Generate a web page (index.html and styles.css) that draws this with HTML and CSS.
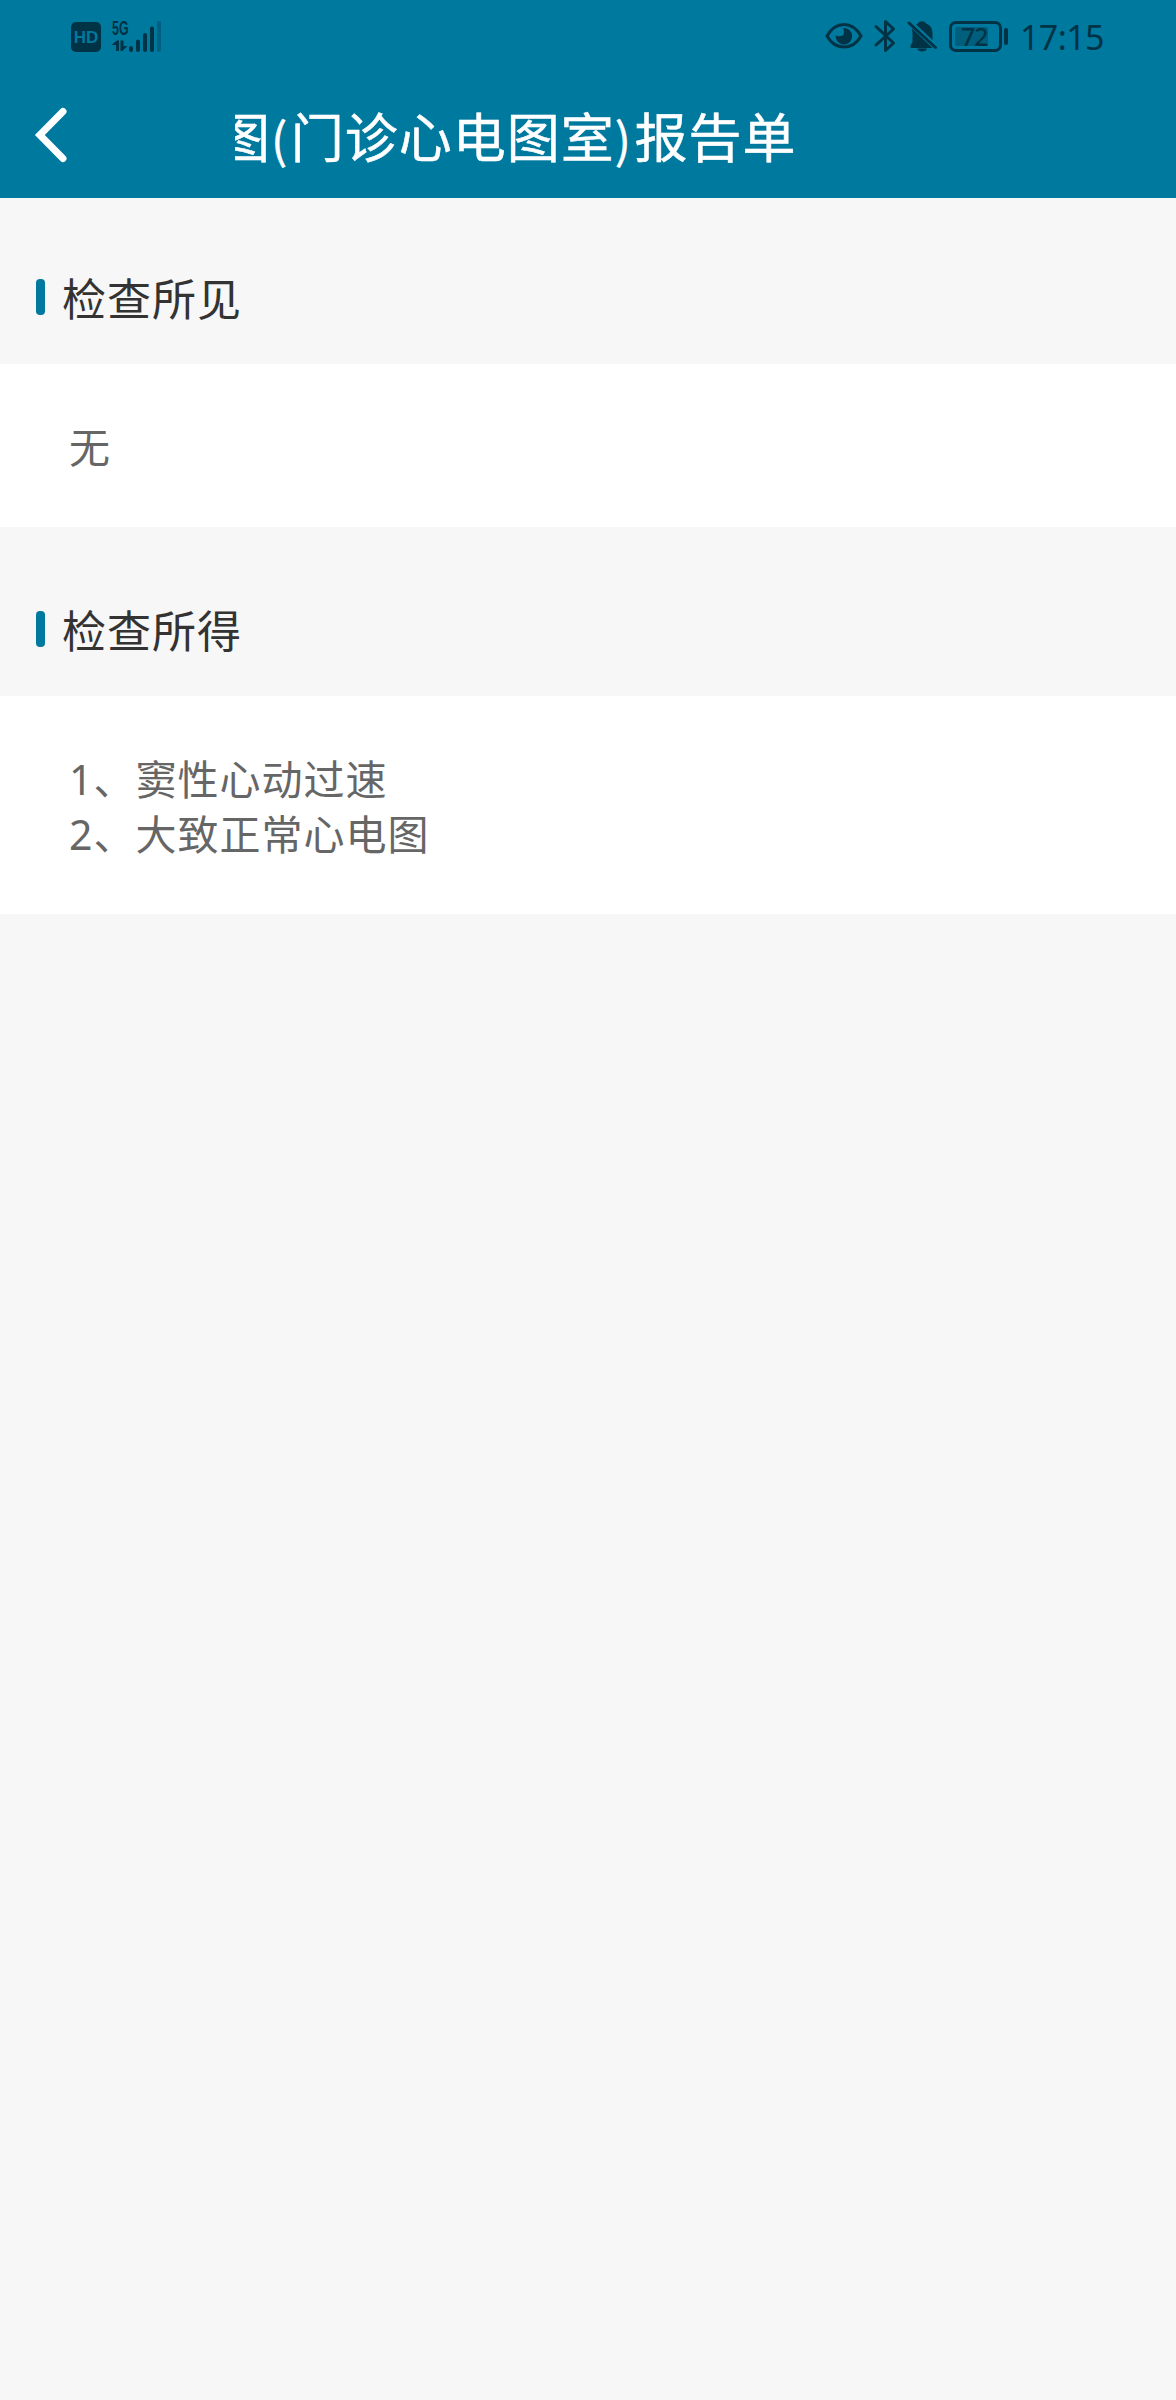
FILE: index.html
```html
<!DOCTYPE html>
<html lang="zh-CN">
<head>
<meta charset="utf-8">
<title>报告单</title>
<link rel="stylesheet" href="styles.css">
</head>
<body>
<header class="header">
  <div class="status">
    <div class="status-left">
      <span class="hd">HD</span>
      <div class="network">
        <span class="network-type">5G</span>
        <svg class="signal" width="50" height="34" viewBox="0 0 50 34">
          <path d="M0 25.500 5 21.500H7V32H4V26H0ZM8.500 21.500H11.500V27H15.500L10.500 32H8.500Z"/>
          <rect x="17" y="27" width="4" height="6" rx="2"/>
          <rect x="24" y="20.500" width="4" height="12.500" rx="2"/>
          <rect x="31" y="14" width="4" height="19" rx="2"/>
          <rect x="38" y="7.500" width="4" height="25.500" rx="2"/>
          <rect x="45" y="2" width="4" height="31" rx="2" opacity=".35"/>
        </svg>
      </div>
    </div>
    <div class="status-right">
      <svg class="eye" width="38" height="28" viewBox="0 0 38 28">
        <path d="M2 14C6 7 12 2.500 19 2.500S32 7 36 14C32 21 26 25 19 25S6 21 2 14Z" fill="none" stroke="currentColor" stroke-width="3.200" stroke-linejoin="round"/>
        <path d="M18 6A8.300 8.300 0 1 1 10.700 13C13 15.500 19 14.500 19 10.500C19 8.500 18.500 7.500 18 6Z"/>
      </svg>
      <svg class="bluetooth" width="22" height="34" viewBox="0 0 22 34">
        <path d="M2 7.500 19.500 24 11.500 31.500V2.500L19.500 10 2 26" fill="none" stroke="currentColor" stroke-width="3" stroke-linejoin="round" stroke-linecap="round"/>
      </svg>
      <svg class="bell" width="32" height="32" viewBox="0 0 32 32">
        <path d="M11 3.500C12 .500 18 .500 19 3.500C24 5.500 25.500 9 25.500 14V20L9 4.500ZM5 8.500 25.500 28H3.500V25.500L5.500 22V13C5.500 11 4.500 10 5 8.500ZM10 28.500H20C19 32.500 11.500 32.500 10 28.500Z"/>
        <path d="M2 3 28.500 27.500" stroke="currentColor" stroke-width="3" stroke-linecap="round"/>
      </svg>
      <div class="battery"><div class="battery-case"><span class="battery-level">72</span></div><i class="battery-tip"></i></div>
      <time class="clock">17:15</time>
    </div>
  </div>
  <nav class="nav">
    <svg class="back" width="30" height="54" viewBox="0 0 30 54" aria-label="返回">
      <path d="M27 3.500 3.800 27 27 50.500" fill="none" stroke="currentColor" stroke-width="7" stroke-linecap="round"/>
    </svg>
    <h1 class="title"><span class="title-text">图<span class="paren">(</span>门诊心电图室<span class="paren">)</span>报告单</span></h1>
  </nav>
</header>
<main>
  <section>
    <h2 class="heading first">检查所见</h2>
    <div class="content">无</div>
  </section>
  <section>
    <h2 class="heading">检查所得</h2>
    <div class="content">1、窦性心动过速<br>2、大致正常心电图</div>
  </section>
</main>
</body>
</html>
```
FILE: styles.css
```css
* { box-sizing: border-box; }
body {
  margin: 0;
  min-height: 2400px;
  background: #f7f7f7;
  font-family: "Noto Sans", "Noto Sans CJK SC", sans-serif;
}
svg { display: block; fill: currentColor; overflow: visible; flex: none; }
h1, h2 { margin: 0; font-weight: 400; }
.header { height: 198px; background: #00799f; color: #fff; }
.status {
  height: 72px;
  padding: 0 72px 0 71px;
  display: flex;
  justify-content: space-between;
  color: #003345;
}
.status-left, .status-right { display: flex; align-items: flex-start; }
.hd {
  width: 30px;
  height: 30px;
  margin-top: 22px;
  border-radius: 5px;
  background: #003345;
  color: #00799f;
  font: 700 17px/31px "Liberation Sans", sans-serif;
  text-align: center;
}
.network { display: grid; margin: 19px 0 0 11px; }
.network-type, .signal { grid-area: 1 / 1; }
.network-type {
  font: 700 20px/18px "Liberation Sans", sans-serif;
  transform: scaleX(.62);
  transform-origin: left;
  width: 26px;
}
.eye { margin-top: 22px; }
.bluetooth { margin: 19px 0 0 11px; }
.bell { margin: 20px 0 0 11px; }
.battery { display: flex; align-items: center; margin: 21px 0 0 10px; gap: 2px; }
.battery-case {
  width: 53px;
  height: 31px;
  padding: 3px;
  border: 3px solid #003345;
  border-radius: 7px;
}
.battery-level {
  display: block;
  width: 33px;
  height: 19px;
  padding-left: 6px;
  border-radius: 2px;
  background: #005f7d;
  font: 500 25px/19px "Noto Sans", sans-serif;
  letter-spacing: -1px;
}
.battery-tip { width: 4px; height: 17px; border-radius: 2px; background: #003345; }
.clock { width: 84px; margin: 13px 0 0 12px; font-size: 34px; line-height: 48px; letter-spacing: -.6px; white-space: nowrap; }
.nav { height: 126px; padding-left: 36px; display: flex; align-items: flex-start; }
.back { margin-top: 36px; }
.title {
  width: 706px;
  margin: 23px 0 0 169px;
  overflow: hidden;
  white-space: nowrap;
  font: 400 53px/80px "Noto Sans CJK SC", sans-serif;
  letter-spacing: 1px;
  -webkit-text-stroke: .5px #fff;
}
.title-text { display: block; margin-left: -18px; }
.paren { font-size: 48px; letter-spacing: 3.500px; }
.heading {
  height: 169px;
  padding: 39px 0 0 36px;
  display: flex;
  align-items: center;
  gap: 17px;
  font-size: 44px;
  letter-spacing: 1px;
  line-height: 66px;
  color: #333;
}
.heading.first { height: 166px; padding-top: 36px; }
.heading::before {
  content: "";
  width: 9px;
  height: 36px;
  margin-bottom: 4px;
  border-radius: 4px;
  background: #00799f;
}
.content {
  padding: 56px 69px 52px;
  background: #fff;
  font-size: 41px;
  letter-spacing: 1px;
  line-height: 55px;
  color: #666;
}
```
